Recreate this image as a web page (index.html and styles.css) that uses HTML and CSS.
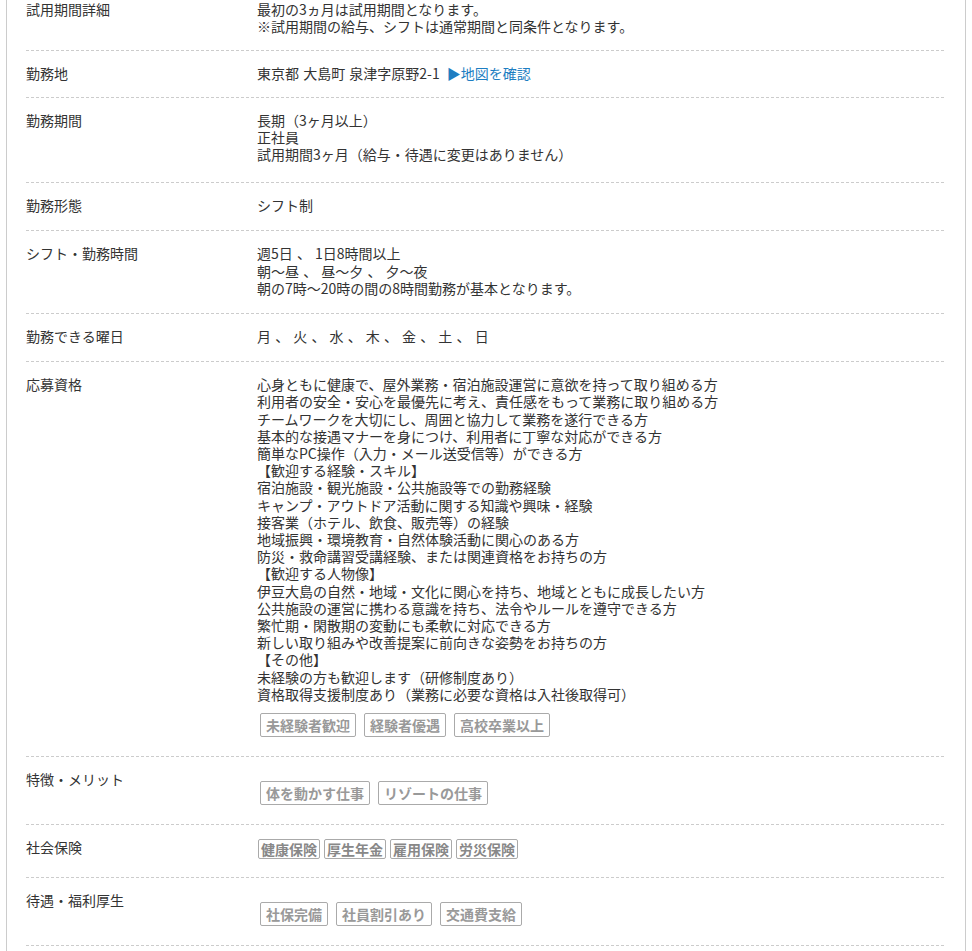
FILE: index.html
```html
<!DOCTYPE html>
<html lang="ja">
<head>
	<meta charset="UTF-8">
	<title>求人詳細</title>
	<link rel="stylesheet" href="styles.css">
</head>
<body>
	<div id="detail">
		<div class="list">
			<dl class="row first">
				<dt>試用期間詳細</dt>
				<dd>最初の3ヵ月は試用期間となります。<br>※試用期間の給与、シフトは通常期間と同条件となります。</dd>
			</dl>
			<dl class="row short">
				<dt>勤務地</dt>
				<dd>東京都 大島町 泉津字原野2-1 <a href="#" class="map">▶地図を確認</a></dd>
			</dl>
			<dl class="row tall">
				<dt>勤務期間</dt>
				<dd>長期（3ヶ月以上）<br>正社員<br>試用期間3ヶ月（給与・待遇に変更はありません）</dd>
			</dl>
			<dl class="row">
				<dt>勤務形態</dt>
				<dd>シフト制</dd>
			</dl>
			<dl class="row">
				<dt>シフト・勤務時間</dt>
				<dd>週5日 、 1日8時間以上<br>朝～昼 、 昼～夕 、 夕～夜<br>朝の7時～20時の間の8時間勤務が基本となります。</dd>
			</dl>
			<dl class="row">
				<dt>勤務できる曜日</dt>
				<dd>月 、 火 、 水 、 木 、 金 、 土 、 日</dd>
			</dl>
			<dl class="row">
				<dt>応募資格</dt>
				<dd>
					心身ともに健康で、屋外業務・宿泊施設運営に意欲を持って取り組める方<br>
					利用者の安全・安心を最優先に考え、責任感をもって業務に取り組める方<br>
					チームワークを大切にし、周囲と協力して業務を遂行できる方<br>
					基本的な接遇マナーを身につけ、利用者に丁寧な対応ができる方<br>
					簡単なPC操作（入力・メール送受信等）ができる方<br>
					【歓迎する経験・スキル】<br>
					宿泊施設・観光施設・公共施設等での勤務経験<br>
					キャンプ・アウトドア活動に関する知識や興味・経験<br>
					接客業（ホテル、飲食、販売等）の経験<br>
					地域振興・環境教育・自然体験活動に関心のある方<br>
					防災・救命講習受講経験、または関連資格をお持ちの方<br>
					【歓迎する人物像】<br>
					伊豆大島の自然・地域・文化に関心を持ち、地域とともに成長したい方<br>
					公共施設の運営に携わる意識を持ち、法令やルールを遵守できる方<br>
					繁忙期・閑散期の変動にも柔軟に対応できる方<br>
					新しい取り組みや改善提案に前向きな姿勢をお持ちの方<br>
					【その他】<br>
					未経験の方も歓迎します（研修制度あり）<br>
					資格取得支援制度あり（業務に必要な資格は入社後取得可）
					<ul class="tags">
						<li>未経験者歓迎</li>
						<li>経験者優遇</li>
						<li>高校卒業以上</li>
					</ul>
				</dd>
			</dl>
			<dl class="row">
				<dt>特徴・メリット</dt>
				<dd>
					<ul class="tags">
						<li>体を動かす仕事</li>
						<li>リゾートの仕事</li>
					</ul>
				</dd>
			</dl>
			<dl class="row">
				<dt>社会保険</dt>
				<dd>
					<ul class="tags small">
						<li>健康保険</li>
						<li>厚生年金</li>
						<li>雇用保険</li>
						<li>労災保険</li>
					</ul>
				</dd>
			</dl>
			<dl class="row">
				<dt>待遇・福利厚生</dt>
				<dd>
					<ul class="tags">
						<li>社保完備</li>
						<li>社員割引あり</li>
						<li>交通費支給</li>
					</ul>
				</dd>
			</dl>
		</div>
	</div>
</body>
</html>
```
FILE: styles.css
```css
*{
	margin: 0;
	padding: 0;
	box-sizing: border-box;
}
body{
	font-family: "Noto Sans CJK JP", "Noto Sans", sans-serif;
	font-size: 14px;
	line-height: 17.2px;
	color: #333;
	background: #fff;
}
#detail{
	width: 960px;
	min-height: 951px;
	margin: 0 6px;
	border-left: 1px solid #ccc;
	border-right: 1px solid #ccc;
	padding: 0 20px 0 19px;
	overflow: hidden;
}
.list{
	margin-top: -13px;
}
.row{
	display: flex;
	padding: 14px 0 17px;
	background: linear-gradient(to right, #ccc 3px, transparent 3px) repeat-x left bottom;
	background-size: 5px 1px;
}
.row.first{
	padding-bottom: 16px;
}
.row.short{
	padding-bottom: 15px;
}
.row.tall{
	padding-bottom: 20px;
}
.row dt{
	width: 231px;
	flex-shrink: 0;
}
.row dd{
	flex: 1;
	word-spacing: 1px;
}
.map{
	display: inline-block;
	margin-left: 3px;
	line-height: 17px;
	vertical-align: top;
	color: #1d7ec2;
	text-decoration: none;
}
.tags{
	list-style: none;
	display: flex;
	flex-wrap: wrap;
	gap: 8px;
	margin: 10px 0 3px 3px;
	word-spacing: 0;
}
.tags li{
	height: 24px;
	line-height: 22px;
	padding: 0 5px;
	border: 1px solid #aaa;
	border-radius: 2px;
	color: #999;
	font-weight: bold;
}
.tags.small{
	gap: 4px;
	margin: 0 0 2px 1px;
}
.tags.small li{
	height: 20px;
	line-height: 18px;
	padding: 0 2px;
	color: #888;
}
```
